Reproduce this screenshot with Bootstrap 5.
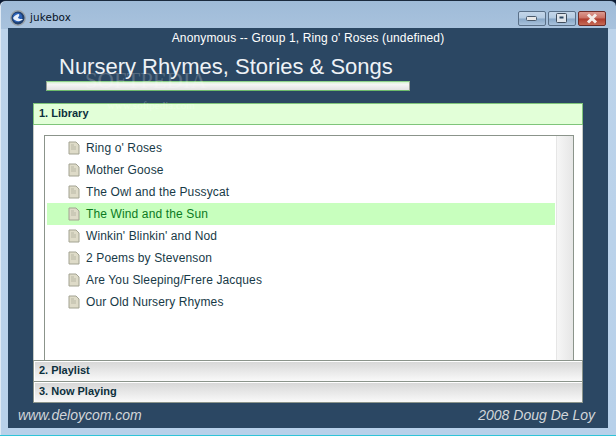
<!DOCTYPE html>
<html lang="en"><head><meta charset="utf-8"><title>jukebox</title>
<link href="https://cdn.jsdelivr.net/npm/bootstrap@5.3.0/dist/css/bootstrap.min.css" rel="stylesheet">
<style>
html,body{width:616px;height:436px;overflow:hidden;margin:0;background:#0b1a33}
body{font-family:"Liberation Sans",Arial,sans-serif}
.win-frame{width:616px;height:436px;padding:2px;border-radius:6px 6px 0 0;border-top:1px solid #1a2a3e;border-bottom:1px solid #2fc4d8;background:linear-gradient(180deg,#9fbbd8 0,#a8c2dd 28px,#bcd3ea 28px,#b8d1ea 100%);display:flex;flex-direction:column;box-shadow:inset 1px 0 0 #dfeaf5}
.tbar{height:25px;flex:none;padding:5px 0 0 8px}
.tbar-name{font-family:"DejaVu Sans",sans-serif;font-size:10.4px;color:#06121f;letter-spacing:.1px}
.wbtns{gap:2px;margin-top:0;margin-right:8px}
.wbtn{height:15px;border:1px solid #5a7088;border-radius:2px;display:flex;align-items:center;justify-content:center;background:linear-gradient(180deg,#c4d6e9 0,#b4cbe2 48%,#87a6c6 52%,#a9c3dd 100%)}
.wbtn-n{width:28px}
.wbtn-x{width:28px;border-color:#6d2c28;background:linear-gradient(180deg,#dc9a90 0,#ca6f62 48%,#ae3a2c 52%,#c66a55 100%)}
.client{margin:0 6px 6px 6px;flex:1;background:#2b4763;display:flex;flex-direction:column;position:relative;height:400px}
.now-line{color:#fff;font-size:12px;line-height:14px;text-align:center;padding-top:3px;letter-spacing:.13px}
.title-wrap{margin:7px 0 0 38px;width:364px}
.title-text{color:#eef2f6;font-size:22px;line-height:30px;padding-left:13px;white-space:nowrap}
.title-bar{height:10px;margin-top:-1px;border:1px solid #9a9f98;border-top-color:#8dd08a;border-bottom-color:#6dbb6a;background:linear-gradient(180deg,#d6f3d0 0,#f6f6f6 30%,#e2e2e2 100%)}
.wm1{position:absolute;left:77px;top:40px;font-family:"Liberation Serif",serif;font-size:22.6px;color:#fff;opacity:.2;line-height:26px}
.wm2{position:absolute;left:99px;top:70px;font-family:"Liberation Serif",serif;font-size:11px;color:#fff;opacity:.28;line-height:14px}
.acc{margin:12px 25px 0 25px;width:550px;height:300px;display:flex;flex-direction:column;background:#fff}
.acc-head{height:21px;flex:none;font-weight:700;font-size:11px;color:#0c2f3c;padding-left:5px;line-height:19px;background:linear-gradient(180deg,#d6d6d6 0,#f9f9f9 100%);border:1px solid #8b948b;border-bottom:0;box-shadow:inset 1px 1px 0 #fff}
.acc-head.open{height:22px;background:#e2ffd8;border:1px solid #7fc57a;line-height:18px;box-shadow:none}
.acc-head.last{height:22px;border-bottom:1px solid #8b948b}
.acc-body{flex:1;padding:10px 8px 0 10px;border-left:1px solid #c4cac4;border-right:1px solid #c4cac4;min-height:0}
.tree-box{height:100%;border:1px solid #8b948b;border-bottom:0;display:flex;background:#fff}
.tree-list{flex:1;padding:1px 1px 0 2px}
.tree-row{height:22px;display:flex;align-items:center;padding-left:21px;font-size:12px;color:#183a47;letter-spacing:.13px}
.tree-row.sel{background:#c8ffbe;color:#0a7a1e}
.tree-row svg{margin-right:6px;flex:none}
.vscroll{width:17px;flex:none;border-left:1px solid #e6e6e6;background:linear-gradient(90deg,#f6f6f6,#e6e6e6)}
.foot{height:25px;flex:none;display:flex;justify-content:space-between;align-items:center;padding:0 13px 0 10px;color:#d2d6da;font-style:italic;font-size:14px}
</style></head><body>
<div class="win-frame">
 <div class="tbar d-flex align-items-center justify-content-between">
  <div class="d-flex align-items-center gap-1">
   <svg width="16" height="16" viewBox="0 0 16 16"><circle cx="8" cy="8" r="7.2" fill="#20406e" stroke="#9aa2a8" stroke-width="1.4"/><circle cx="7.5" cy="7.5" r="4.8" fill="#2c62b8"/><path d="M3 8c2-3 4-4 6-4 1 2-1 3-1 4 1 1 3 1 5 1-2 3-8 3-10-1z" fill="#e8f0fb"/></svg>
   <span class="tbar-name">jukebox</span>
  </div>
  <div class="d-flex wbtns">
   <div class="wbtn wbtn-n"><svg width="12" height="6" viewBox="0 0 12 6"><rect x=".5" y="1.5" width="10" height="4" rx="1" fill="#e8e8e8" stroke="#4a5a6c"/></svg></div>
   <div class="wbtn wbtn-n"><svg width="12" height="10" viewBox="0 0 12 10"><rect x=".5" y=".5" width="10" height="9" rx="1" fill="#dfe4ea" stroke="#3f4c5c"/><rect x="3.5" y="3.5" width="4" height="2" fill="#2b4763"/></svg></div>
   <div class="wbtn wbtn-x"><svg width="14" height="11" viewBox="0 0 14 11"><path d="M3 1.5 11 9.5M11 1.5 3 9.5" stroke="#f4ece8" stroke-width="3"/></svg></div>
  </div>
 </div>
 <div class="client">
  <div class="now-line">Anonymous -- Group 1, Ring o' Roses (undefined)</div>
  <div class="title-wrap">
   <div class="title-text">Nursery Rhymes, Stories &amp; Songs</div>
   <div class="title-bar"></div>
  </div>
  <div class="wm1">SOFTPEDIA</div>
  <div class="wm2">www.softpedia.com</div>
  <div class="acc">
   <div class="acc-head open">1. Library</div>
   <div class="acc-body">
    <div class="tree-box">
     <div class="tree-list" id="rows"></div>
     <div class="vscroll"></div>
    </div>
   </div>
   <div class="acc-head">2. Playlist</div>
   <div class="acc-head last">3. Now Playing</div>
  </div>
  <div class="foot"><span>www.deloycom.com</span><span>2008 Doug De Loy</span></div>
 </div>
</div>
<script>
const names=["Ring o' Roses","Mother Goose","The Owl and the Pussycat","The Wind and the Sun","Winkin' Blinkin' and Nod","2 Poems by Stevenson","Are You Sleeping/Frere Jacques","Our Old Nursery Rhymes"];
const ico='<svg width="12" height="14" viewBox="0 0 12 14"><path d="M1 1h7l3 3v9H1z" fill="#dedbc8" stroke="#a3a392"/><path d="M3 4h3M3 6h5M3 8h5" stroke="#b9b8a6"/></svg>';
document.getElementById('rows').innerHTML=names.map((n,i)=>`<div class="tree-row${i==3?' sel':''}">${ico}<span>${n}</span></div>`).join('');
</script>
<script src="https://cdn.jsdelivr.net/npm/bootstrap@5.3.0/dist/js/bootstrap.bundle.min.js"></script>
</body></html>
